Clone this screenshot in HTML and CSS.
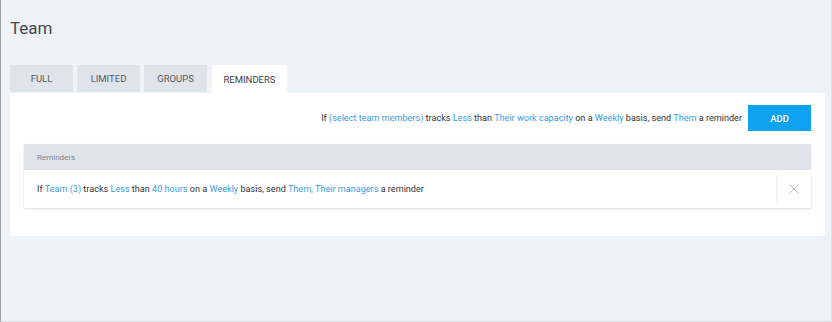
FILE: index.html
```html
<!DOCTYPE html>
<html lang="en">
<head>
    <meta charset="UTF-8">
    <title>Team</title>
    <link rel="stylesheet" href="styles.css">
</head>
<body>

<div class="page">
    <h1 class="page-title">Team</h1>

    <!-- 탭 -->
    <div class="tabs">
        <div class="tab">FULL</div>
        <div class="tab">LIMITED</div>
        <div class="tab">GROUPS</div>
        <div class="tab active">REMINDERS</div>
    </div>

    <div class="panel">
        <div class="new-reminder">
            <p class="sentence">
                If <a class="pick">(select team members)</a> tracks <a class="pick">Less</a> than
                <a class="pick">Their work capacity</a> on a <a class="pick">Weekly</a> basis, send
                <a class="pick">Them</a> a reminder
            </p>
            <button class="btn-add">ADD</button>
        </div>

        <div class="reminder-table">
            <div class="table-head">Reminders</div>
            <div class="table-row">
                <p class="sentence">
                    If <a class="pick">Team (3)</a> tracks <a class="pick">Less</a> than
                    <a class="pick">40 hours</a> on a <a class="pick">Weekly</a> basis, send
                    <a class="pick">Them, Their managers</a> a reminder
                </p>
                <div class="row-remove">
                    <svg width="10" height="10" viewBox="0 0 10 10">
                        <path d="M0.5 0.5 L9.5 9.5 M9.5 0.5 L0.5 9.5" stroke="#b0b4ba" stroke-width="1" fill="none"/>
                    </svg>
                </div>
            </div>
        </div>
    </div>
</div>

</body>
</html>
```

FILE: styles.css
```css
body {
    font-family: Roboto, "Helvetica Neue", Arial, sans-serif;
    background-color: #eff2f7;
    margin: 0;
    height: 322px;
    box-sizing: border-box;
    border-left: 1px solid #9ca1a8;
    border-right: 1px solid #dde1e7;
    border-bottom: 1px solid #dde1e7;
}

.page {
    padding: 0 6px 0 9px;
}

.page-title {
    margin: 0;
    padding-top: 18px;
    height: 65px;
    box-sizing: border-box;
    font-size: 17px;
    font-weight: 400;
    color: #444a52;
}

/* 탭 */
.tabs {
    display: flex;
    gap: 4px;
    height: 28px;
}

.tab {
    width: 63px;
    height: 27px;
    display: flex;
    align-items: center;
    justify-content: center;
    background-color: #dfe3ea;
    font-size: 9.5px;
    color: #555b63;
}

.tab.active {
    width: 75px;
    height: 28px;
    margin-left: 1px;
    background-color: #ffffff;
    color: #3a3f46;
}

.panel {
    background-color: #ffffff;
    padding: 12px 14px 28px 14px;
}

.new-reminder {
    display: flex;
    justify-content: flex-end;
    align-items: center;
    gap: 6px;
    height: 26px;
}

.sentence {
    margin: 0;
    font-size: 9.1px;
    color: #2f343a;
}

.pick {
    color: #3a9be6;
}

.btn-add {
    width: 63px;
    height: 26px;
    border: none;
    background-color: #0ea2f0;
    color: #ffffff;
    font-family: inherit;
    font-size: 9.5px;
    font-weight: 500;
}

.reminder-table {
    margin-top: 13px;
    box-shadow: 0 1px 2px rgba(0,0,0,0.15);
}

.table-head {
    height: 26px;
    display: flex;
    align-items: center;
    padding-left: 13px;
    background-color: #dfe3ea;
    font-size: 8px;
    color: #80868e;
}

.table-row {
    height: 38px;
    display: flex;
    align-items: center;
    justify-content: space-between;
    padding-left: 13px;
}

.row-remove {
    width: 34px;
    height: 28px;
    border-left: 1px solid #eceef1;
    display: flex;
    align-items: center;
    justify-content: center;
}
```
